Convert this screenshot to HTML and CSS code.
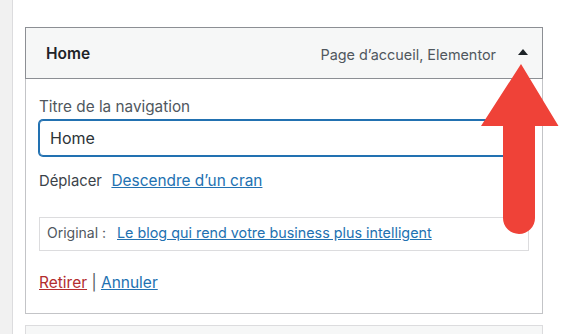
FILE: index.html
```html
<!DOCTYPE html>
<html lang="fr">
<head>
<meta charset="utf-8">
<title>Menu item</title>
<link rel="stylesheet" href="styles.css">
</head>
<body>
<div class="page">
  <div class="sidebar"></div>
  <div class="main">
    <div class="menu-item">
      <div class="item-handle">
        <span class="item-title">Home</span>
        <span class="item-controls">
          <span class="item-type">Page d’accueil, Elementor</span>
          <span class="item-toggle"></span>
        </span>
      </div>
      <div class="item-settings">
        <label class="field-label" for="nav-title">Titre de la navigation</label>
        <input class="field-input" id="nav-title" type="text" value="Home">
        <div class="move-row">
          <span class="move-label">Déplacer</span>
          <a class="link move-link" href="#">Descendre d’un cran</a>
        </div>
        <div class="original-box">
          <span class="original-label">Original&nbsp;:</span>
          <a class="link original-link" href="#">Le blog qui rend votre business plus intelligent</a>
        </div>
        <div class="actions">
          <a class="link-delete" href="#">Retirer</a><span class="sep"> | </span><a class="link" href="#">Annuler</a>
        </div>
      </div>
    </div>
    <div class="menu-item-next"></div>
  </div>
</div>
<svg class="callout-arrow" width="574" height="334" viewBox="0 0 574 334" aria-hidden="true">
  <path d="M521 64 L558.5 126 L535 126 L535 218 A16 16 0 0 1 503 218 L503 126 L481 126 Z" fill="#ef4238"/>
</svg>
</body>
</html>
```

FILE: styles.css
```css
html, body {
  margin: 0;
  padding: 0;
  background: #ffffff;
}

body {
  font-family: Inter, "Liberation Sans", Arial, sans-serif;
  color: #3c434a;
  width: 574px;
  height: 334px;
  overflow: hidden;
  position: relative;
}

.page {
  display: flex;
  height: 334px;
}

.sidebar {
  width: 12px;
  flex: 0 0 12px;
  background: #f1f1f1;
  border-right: 1px solid #dcdcde;
}

.main {
  padding: 27px 0 0 12px;
  width: 518px;
}

.menu-item {
  width: 518px;
}

.item-handle {
  height: 50px;
  border: 1px solid #8c8f94;
  background: #f6f7f7;
  display: flex;
  align-items: center;
  justify-content: space-between;
  padding: 0 14px 0 20px;
}

.item-title {
  font-size: 15.5px;
  font-weight: 600;
  color: #1d2327;
  line-height: 20px;
  margin-top: 1px;
}

.item-controls {
  display: flex;
  align-items: center;
}

.item-type {
  font-size: 14.4px;
  color: #50575e;
  line-height: 20px;
  margin-top: 3px;
}

.item-toggle {
  width: 0;
  height: 0;
  border-left: 5px solid transparent;
  border-right: 5px solid transparent;
  border-bottom: 6px solid #1d2327;
  margin-left: 22px;
  margin-top: -2px;
}

.item-settings {
  border: 1px solid #c3c4c7;
  border-top: none;
  padding: 18px 14px 20px 13px;
}

.field-label {
  display: block;
  font-size: 15.3px;
  line-height: 20px;
  color: #50575e;
}

.field-input {
  display: block;
  box-sizing: border-box;
  width: 488px;
  height: 36px;
  margin: 3px 0 0 0;
  padding: 0 10px;
  border: 1px solid #2271b1;
  border-radius: 4px;
  box-shadow: 0 0 0 1px #2271b1;
  outline: none;
  font-family: Inter, "Liberation Sans", Arial, sans-serif;
  font-size: 16px;
  color: #2c3338;
  background: #ffffff;
}

.move-row {
  margin-top: 14px;
  line-height: 20px;
}

.move-label {
  font-size: 14.8px;
  color: #3c434a;
}

.link {
  color: #2271b1;
  text-decoration: underline;
}

.move-link {
  font-size: 15.4px;
  margin-left: 5px;
}

.original-box {
  margin-top: 26px;
  border: 1px solid #dcdcde;
  height: 30px;
  padding: 0 7px 2px;
  line-height: 30px;
  font-size: 14px;
  width: 474px;
}

.original-label {
  color: #50575e;
}

.original-link {
  font-size: 14.35px;
  margin-left: 7px;
}

.actions {
  margin-top: 22px;
  font-size: 15.5px;
  line-height: 20px;
  color: #50575e;
}

.link-delete {
  color: #b32d2e;
  text-decoration: underline;
}

.menu-item-next {
  margin-top: 11px;
  height: 40px;
  border: 1px solid #dcdcde;
  background: #f6f7f7;
}

.callout-arrow {
  position: absolute;
  left: 0;
  top: 0;
  pointer-events: none;
}
```
